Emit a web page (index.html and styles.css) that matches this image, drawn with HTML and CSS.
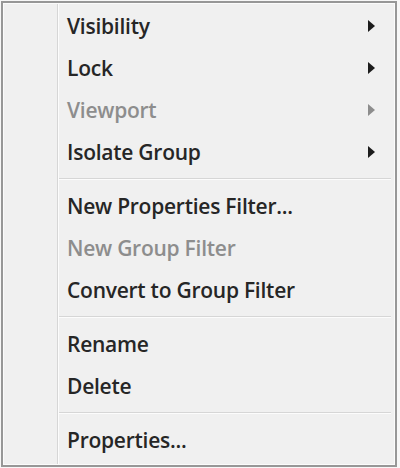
FILE: index.html
```html
<!DOCTYPE html>
<html>
<head>
<meta charset="utf-8">
<link rel="stylesheet" href="styles.css">
</head>
<body>
<div class="menu">
  <div class="inner">
    <div class="item"><span class="label">Visibility</span><span class="arrow"></span></div>
    <div class="item"><span class="label">Lock</span><span class="arrow"></span></div>
    <div class="item disabled"><span class="label">Viewport</span><span class="arrow"></span></div>
    <div class="item"><span class="label">Isolate Group</span><span class="arrow"></span></div>
    <div class="sep"></div>
    <div class="item"><span class="label">New Properties Filter...</span></div>
    <div class="item disabled"><span class="label">New Group Filter</span></div>
    <div class="item"><span class="label">Convert to Group Filter</span></div>
    <div class="sep"></div>
    <div class="item"><span class="label">Rename</span></div>
    <div class="item"><span class="label">Delete</span></div>
    <div class="sep"></div>
    <div class="item"><span class="label">Properties...</span></div>
  </div>
</div>
</body>
</html>
```
FILE: styles.css
```css
html, body {
  margin: 0;
  padding: 0;
  background: #f7f7f7;
}
body {
  width: 400px;
  height: 468px;
  padding: 1px 0 0 1px;
  box-sizing: border-box;
  font-family: "Open Sans", "Noto Sans", sans-serif;
}
.menu {
  width: 396px;
  height: 466px;
  box-sizing: border-box;
  border: 2px solid #979797;
  background: #f0f0f0;
}
.inner {
  height: 100%;
  box-sizing: border-box;
  border: 1px solid #fbfbfb;
  padding: 1px 3px 0 0;
  display: flex;
  flex-direction: column;
  background: linear-gradient(to right, transparent 53px, #d6d6d6 53px, #d6d6d6 54px, #fcfcfc 54px, #fcfcfc 55px, transparent 55px);
}
.item {
  height: 42px;
  flex: none;
  display: flex;
  align-items: center;
  padding-left: 63px;
  padding-right: 16px;
  color: #262626;
  font-size: 21px;
  font-weight: 600;
  letter-spacing: -0.25px;
}
.label {
  flex: 1;
}
.item.disabled {
  color: #8d8d8d;
}
.arrow {
  width: 0;
  height: 0;
  border-top: 6px solid transparent;
  border-bottom: 6px solid transparent;
  border-left: 7px solid #1c1c1c;
}
.item.disabled .arrow {
  border-left-color: #8d8d8d;
}
.sep {
  flex: none;
  height: 12px;
  margin-left: 55px;
  display: flex;
  flex-direction: column;
  justify-content: center;
}
.sep::before {
  content: "";
  height: 1px;
  background: #d6d6d6;
}
.sep::after {
  content: "";
  height: 1px;
  background: #fcfcfc;
}
```
